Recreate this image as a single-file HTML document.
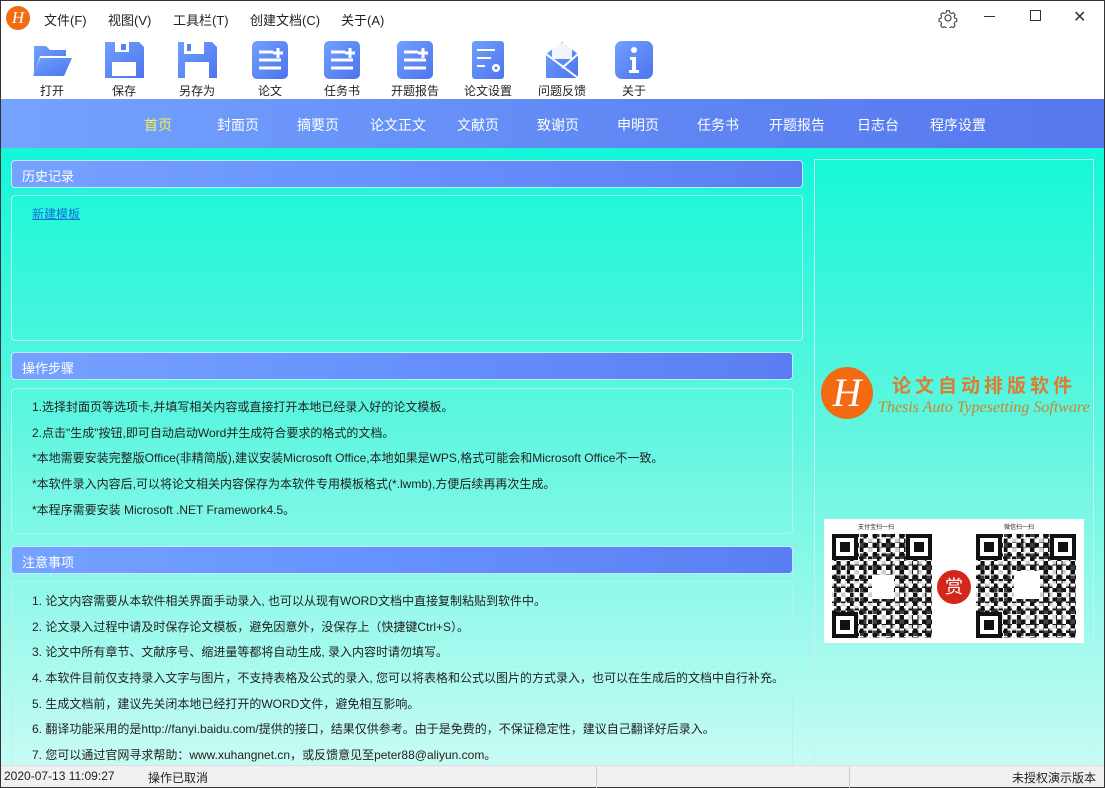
<!DOCTYPE html>
<html><head><meta charset="utf-8">
<style>
*{margin:0;padding:0;box-sizing:border-box}
body{width:1105px;height:788px;overflow:hidden;font-family:"Liberation Sans","Noto Sans CJK SC",sans-serif;font-size:12px;color:#222;background:#fff;position:relative}
.win{position:absolute;left:0;top:0;width:1105px;height:788px;border:1px solid #333}
.abs{position:absolute}
.menu span{position:absolute;top:10px;font-size:13px;color:#222}
.tb{position:absolute;top:40px;width:60px;text-align:center;font-size:12px}
.tb svg{display:block;margin:0 auto 2px}
.nav{position:absolute;left:1px;top:99px;width:1103px;height:49px;background:linear-gradient(90deg,#75a3ff,#5f86f3 60%,#5677ee)}
.nav span{position:absolute;top:16px;color:#fff;font-size:14px}
.content{position:absolute;left:1px;top:148px;width:1103px;height:617px;background:linear-gradient(180deg,#13f7d8,#5ff6e0 45%,#c7fbf4)}
.hd{position:absolute;height:28px;border-radius:4px;border:1px solid #c9e6ff;background:linear-gradient(90deg,#76a2ff,#6895fe 40%,#5a7ef1);color:#fff;font-size:13px;padding:5px 0 0 10px}
.bx{position:absolute;border:1px solid #b4f3ea;border-radius:4px}
.bx p{position:absolute;left:20px;font-size:12px;color:#222;white-space:nowrap}
.status{position:absolute;left:1px;top:765px;width:1103px;height:22px;background:#f0f0f0;border-top:1px solid #ddd}
.status span{position:absolute;top:3px;font-size:12px}
.qr{position:absolute;width:100px;height:104px;background:
 conic-gradient(#111 25%,#fff 0 50%,#111 0 75%,#fff 0) 0 0/9px 9px,#fff}
.qr::before{content:"";position:absolute;inset:0;background:conic-gradient(#fff 25%,transparent 0 50%,#111 0 75%,transparent 0) 2px 3px/13px 11px;opacity:.8}
.fd{position:absolute;width:26px;height:26px;border:4px solid #111;background:#fff}
.fd::after{content:"";position:absolute;left:4px;top:4px;width:10px;height:10px;background:#111}
</style></head><body>
<div class="win"></div>
<div class="abs" style="left:6px;top:6px;width:24px;height:24px;border-radius:50%;background:#f36a10;color:#fff;font-family:'Liberation Serif',serif;font-style:italic;font-size:17px;text-align:center;line-height:24px">H</div>
<div class="menu"><span style="left:44px">文件(F)</span><span style="left:108px">视图(V)</span><span style="left:173px">工具栏(T)</span><span style="left:250px">创建文档(C)</span><span style="left:341px">关于(A)</span></div>
<svg class="abs" style="left:938px;top:8px" width="20" height="20" viewBox="0 0 20 20" fill="none" stroke="#444" stroke-width="1.2"><circle cx="10" cy="10" r="3"/><path d="M8.5 2h3l.5 2.2 2 1 2-1 2 2.2-1 2 .8 2 2 .6v3l-2 .6-.8 2 1 2-2 2.2-2-1-2 1-.5 2.2h-3l-.5-2.2-2-1-2 1-2-2.2 1-2-.8-2-2-.6v-3l2-.6.8-2-1-2 2-2.2 2 1 2-1z" transform="scale(.9) translate(1 1)"/></svg>
<div class="abs" style="left:984px;top:16px;width:11px;height:1px;background:#333"></div>
<div class="abs" style="left:1030px;top:10px;width:11px;height:11px;border:1px solid #333"></div>
<div class="abs" style="left:1073px;top:7px;font-size:16px;color:#333">✕</div>

<svg width="0" height="0" style="position:absolute"><defs><linearGradient id="g" x1="0" y1="0" x2="1" y2="1"><stop offset="0" stop-color="#6fa0ff"/><stop offset="1" stop-color="#4e74ec"/></linearGradient></defs></svg>
<div class="tb" style="left:22px"><svg width="44" height="40" viewBox="0 0 44 40"><path d="M4 6h12l4 4h16v6H10L4 34z" fill="url(#g)"/><path d="M10 18h32l-8 18H3z" fill="url(#g)"/></svg>打开</div>
<div class="tb" style="left:94px"><svg width="44" height="40" viewBox="0 0 44 40"><path d="M3 2h34l5 5v31H3z" fill="url(#g)"/><rect x="13" y="2" width="14" height="10" fill="#fff"/><rect x="19" y="4" width="5" height="6" fill="#5a80f0"/><rect x="10" y="22" width="24" height="14" fill="#fff"/></svg>保存</div>
<div class="tb" style="left:167px"><svg width="44" height="40" viewBox="0 0 44 40"><path d="M3 2h34l5 5v31H3z" fill="url(#g)"/><rect x="9" y="2" width="20" height="12" fill="#fff"/><rect x="12" y="4" width="4" height="7" fill="#5a80f0"/><rect x="10" y="22" width="24" height="16" fill="#fff"/></svg>另存为</div>
<div class="tb" style="left:240px"><svg width="44" height="40" viewBox="0 0 44 40"><rect x="4" y="1" width="36" height="38" rx="5" fill="url(#g)"/><path d="M11 12h14M11 20h22M11 28h22M30 8v10M25 13h10" stroke="#fff" stroke-width="3"/></svg>论文</div>
<div class="tb" style="left:312px"><svg width="44" height="40" viewBox="0 0 44 40"><rect x="4" y="1" width="36" height="38" rx="5" fill="url(#g)"/><path d="M11 12h14M11 20h22M11 28h22M30 8v10M25 13h10" stroke="#fff" stroke-width="3"/></svg>任务书</div>
<div class="tb" style="left:385px"><svg width="44" height="40" viewBox="0 0 44 40"><rect x="4" y="1" width="36" height="38" rx="5" fill="url(#g)"/><path d="M11 12h14M11 20h22M11 28h22M30 8v10M25 13h10" stroke="#fff" stroke-width="3"/></svg>开题报告</div>
<div class="tb" style="left:458px"><svg width="44" height="40" viewBox="0 0 44 40"><rect x="6" y="1" width="32" height="38" rx="3" fill="url(#g)"/><path d="M11 10h18M11 18h14M11 26h8" stroke="#fff" stroke-width="2"/><circle cx="30" cy="28" r="4" fill="#fff"/><circle cx="30" cy="28" r="1.5" fill="#5a80f0"/></svg>论文设置</div>
<div class="tb" style="left:532px"><svg width="44" height="40" viewBox="0 0 44 40"><path d="M6 14L22 2l16 12v24H6z" fill="url(#g)"/><rect x="12" y="3" width="20" height="16" fill="#fff" opacity=".9"/><path d="M6 14l32 24M38 14L22 28" stroke="#fff" stroke-width="2"/></svg>问题反馈</div>
<div class="tb" style="left:604px"><svg width="44" height="40" viewBox="0 0 44 40"><rect x="3" y="1" width="38" height="38" rx="7" fill="url(#g)"/><circle cx="22" cy="10" r="3" fill="#fff"/><path d="M18 17h6v13h3v3H17v-3h3v-10h-2z" fill="#fff"/></svg>关于</div>

<div class="nav">
<span style="left:143px;color:#f1f34a">首页</span><span style="left:216px">封面页</span><span style="left:296px">摘要页</span><span style="left:369px">论文正文</span><span style="left:456px">文献页</span><span style="left:536px">致谢页</span><span style="left:616px">申明页</span><span style="left:696px">任务书</span><span style="left:768px">开题报告</span><span style="left:856px">日志台</span><span style="left:929px">程序设置</span>
</div>

<div class="content">
<div class="hd" style="left:10px;top:12px;width:792px">历史记录</div>
<div class="bx" style="left:10px;top:47px;width:792px;height:146px"><p style="top:9px;color:#1670d8;text-decoration:underline">新建模板</p></div>
<div class="hd" style="left:10px;top:204px;width:782px">操作步骤</div>
<div class="bx" style="left:10px;top:240px;width:782px;height:146px">
<p style="top:9px">1.选择封面页等选项卡,并填写相关内容或直接打开本地已经录入好的论文模板。</p>
<p style="top:35px">2.点击"生成"按钮,即可自动启动Word并生成符合要求的格式的文档。</p>
<p style="top:60px">*本地需要安装完整版Office(非精简版),建议安装Microsoft Office,本地如果是WPS,格式可能会和Microsoft Office不一致。</p>
<p style="top:86px">*本软件录入内容后,可以将论文相关内容保存为本软件专用模板格式(*.lwmb),方便后续再再次生成。</p>
<p style="top:112px">*本程序需要安装 Microsoft .NET Framework4.5。</p>
</div>
<div class="hd" style="left:10px;top:398px;width:782px">注意事项</div>
<div class="bx" style="left:10px;top:433px;width:782px;height:200px">
<p style="top:10px">1. 论文内容需要从本软件相关界面手动录入, 也可以从现有WORD文档中直接复制粘贴到软件中。</p>
<p style="top:36px">2. 论文录入过程中请及时保存论文模板，避免因意外，没保存上（快捷键Ctrl+S）。</p>
<p style="top:61px">3. 论文中所有章节、文献序号、缩进量等都将自动生成, 录入内容时请勿填写。</p>
<p style="top:87px">4. 本软件目前仅支持录入文字与图片，不支持表格及公式的录入, 您可以将表格和公式以图片的方式录入，也可以在生成后的文档中自行补充。</p>
<p style="top:113px">5. 生成文档前，建议先关闭本地已经打开的WORD文件，避免相互影响。</p>
<p style="top:138px">6. 翻译功能采用的是http://fanyi.baidu.com/提供的接口，结果仅供参考。由于是免费的，不保证稳定性，建议自己翻译好后录入。</p>
<p style="top:164px">7. 您可以通过官网寻求帮助：www.xuhangnet.cn，或反馈意见至peter88@aliyun.com。</p>
</div>
<div class="abs" style="left:813px;top:11px;width:280px;height:610px;border:1px solid #c0f5ee"></div>
<div class="abs" style="left:820px;top:219px;width:52px;height:52px;border-radius:50%;background:#f26b12;color:#fff;font-family:'Liberation Serif',serif;font-style:italic;font-size:40px;text-align:center;line-height:52px">H</div>
<div class="abs" style="left:891px;top:223px;font-size:19px;font-weight:bold;color:#e07a2e;letter-spacing:4px">论文自动排版软件</div>
<div class="abs" style="left:877px;top:251px;font-size:16px;color:#c9852e;font-family:'Liberation Serif',serif;font-style:italic;white-space:nowrap">Thesis Auto Typesetting Software</div>
<div class="abs" style="left:823px;top:371px;width:260px;height:124px;background:#fff">
<div class="abs" style="left:34px;top:3px;font-size:6px">支付宝扫一扫</div>
<div class="abs" style="left:180px;top:3px;font-size:6px">微信扫一扫</div>
<div class="qr" style="left:8px;top:15px"></div>
<div class="qr" style="left:152px;top:15px"></div>
<div class="fd" style="left:8px;top:15px"></div><div class="fd" style="left:82px;top:15px"></div><div class="fd" style="left:8px;top:93px"></div>
<div class="fd" style="left:152px;top:15px"></div><div class="fd" style="left:226px;top:15px"></div><div class="fd" style="left:152px;top:93px"></div>
<div class="abs" style="left:48px;top:56px;width:22px;height:24px;background:#fff"></div>
<div class="abs" style="left:190px;top:52px;width:26px;height:28px;background:#fff"></div>
<div class="abs" style="left:113px;top:51px;width:34px;height:34px;border-radius:50%;background:#d4271b;color:#fff;font-size:18px;text-align:center;line-height:34px">赏</div>
</div>
</div>

<div class="status">
<span style="left:3px">2020-07-13 11:09:27</span><span style="left:147px">操作已取消</span>
<div class="abs" style="left:595px;top:0;width:1px;height:22px;background:#ccc"></div>
<div class="abs" style="left:848px;top:0;width:1px;height:22px;background:#ccc"></div>
<span style="left:1011px">未授权演示版本</span>
</div>
</body></html>
